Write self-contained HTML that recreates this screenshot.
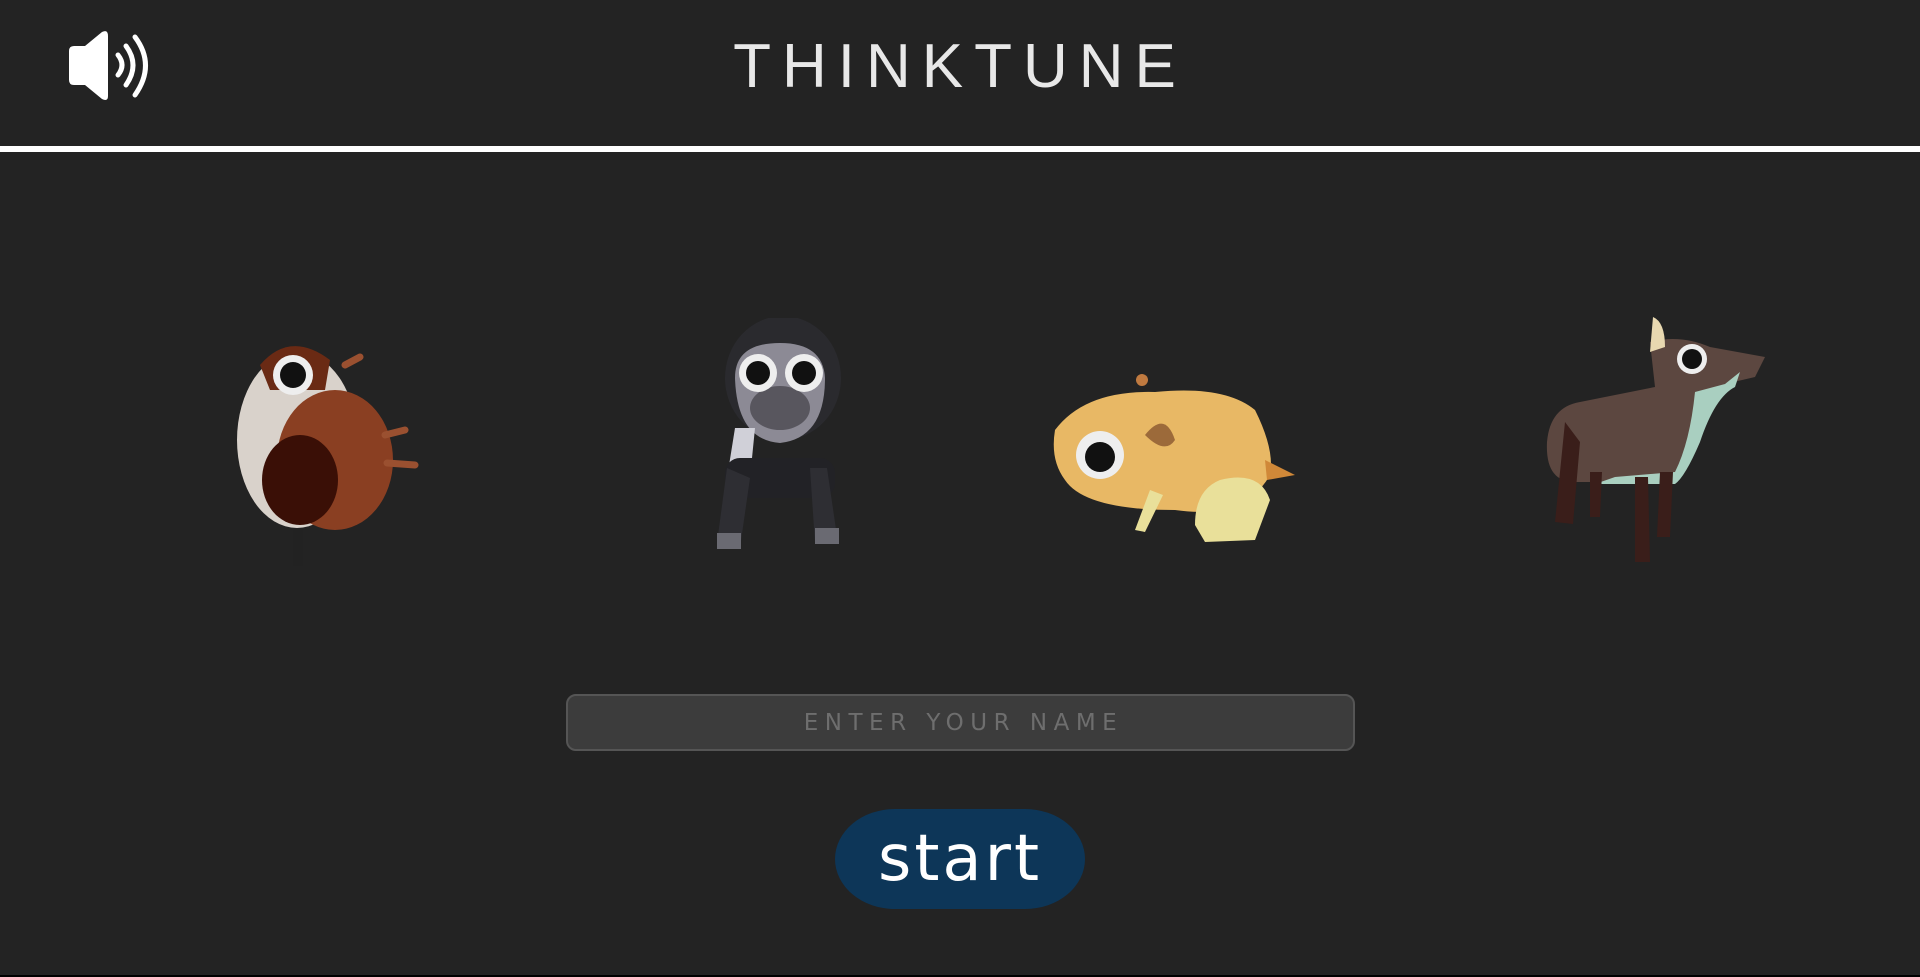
<!DOCTYPE html>
<html><head><meta charset="utf-8"><style>
html,body{margin:0;padding:0;}
body{width:1920px;height:977px;background:#232323;position:relative;overflow:hidden;font-family:"DejaVu Sans","Liberation Sans",sans-serif;}
.title{position:absolute;left:0;width:1920px;top:30px;text-align:center;color:#e8e8e8;font-size:62px;letter-spacing:11px;font-weight:300;font-family:"Liberation Sans",sans-serif;line-height:74px;padding-left:0;box-sizing:border-box}
.line{position:absolute;left:0;top:146px;width:1920px;height:6px;background:#fff}
.input{position:absolute;left:566px;top:694px;width:779px;height:53px;background:#3c3c3c;border:2px solid #555;border-radius:10px;color:#6e6e6e;font-size:23px;letter-spacing:6.5px;text-align:center;line-height:55px;padding-left:6px;box-sizing:content-box}
.btn{position:absolute;left:835px;top:809px;width:250px;height:100px;background:#0d3658;border-radius:60px/50px;color:#fff;font-size:64px;text-align:center;line-height:100px;letter-spacing:3px}
.bottom{position:absolute;left:0;top:975px;width:1920px;height:2px;background:#000}
svg{position:absolute}
</style></head><body>
<svg style="left:60px;top:30px" width="100" height="75" viewBox="0 0 100 75">
<path d="M14 16 H25 L42 2 Q48 -1 48 6 V66 Q48 72 42 69 L25 55 H14 Q9 55 9 50 V21 Q9 16 14 16Z" fill="#fff"/>
<path d="M58 25 Q66 35 58 45" stroke="#fff" stroke-width="5" fill="none" stroke-linecap="round"/>
<path d="M66 16 Q80 35 66 55" stroke="#fff" stroke-width="5" fill="none" stroke-linecap="round"/>
<path d="M75 7 Q96 35 75 65" stroke="#fff" stroke-width="5" fill="none" stroke-linecap="round"/>
</svg>
<div class="title">THINKTUNE</div>
<div class="line"></div>
<svg style="left:225px;top:335px" width="200" height="240" viewBox="0 0 200 240">
<ellipse cx="72" cy="105" rx="60" ry="88" fill="#d9d2cb"/>
<path d="M35 30 Q65 -5 105 25 L100 55 L45 55Z" fill="#6a2a14"/>
<ellipse cx="110" cy="125" rx="58" ry="70" fill="#8a3f22"/>
<ellipse cx="75" cy="145" rx="38" ry="45" fill="#3a0f06"/>
<path d="M160 100 L180 95 M162 128 L190 130 M120 30 L135 22" stroke="#9a5030" stroke-width="7" stroke-linecap="round"/>
<circle cx="68" cy="40" r="20" fill="#eee"/><circle cx="68" cy="40" r="13" fill="#111"/>
<rect x="68" y="195" width="10" height="36" fill="#222"/>
</svg>
<svg style="left:705px;top:318px" width="150" height="240" viewBox="0 0 150 240">
<ellipse cx="78" cy="60" rx="58" ry="62" fill="#2a2a2e"/>
<path d="M30 60 Q30 25 75 25 Q118 25 120 60 Q120 120 75 125 Q32 122 30 60Z" fill="#8c8a95"/>
<ellipse cx="75" cy="90" rx="30" ry="22" fill="#58565e"/>
<circle cx="53" cy="55" r="19" fill="#eee"/><circle cx="53" cy="55" r="12" fill="#111"/>
<circle cx="99" cy="55" r="19" fill="#eee"/><circle cx="99" cy="55" r="12" fill="#111"/>
<path d="M30 110 L22 160 L45 160 L50 110Z" fill="#d0d0d8"/>
<rect x="20" y="140" width="110" height="40" rx="15" fill="#222226"/>
<path d="M22 150 L12 225 L35 230 L45 160Z M105 150 L110 225 L133 225 L122 150Z" fill="#2e2e33"/>
<rect x="12" y="215" width="24" height="16" fill="#6a6a72"/><rect x="110" y="210" width="24" height="16" fill="#6a6a72"/>
</svg>
<svg style="left:1045px;top:370px" width="260" height="180" viewBox="0 0 260 180">
<path d="M10 60 Q40 20 110 22 Q180 15 210 40 Q230 80 225 105 Q200 150 130 140 Q40 140 20 110 Q5 90 10 60Z" fill="#e8b865"/>
<path d="M100 65 Q120 40 130 70 Q120 85 100 65Z" fill="#9c6a3a"/>
<path d="M175 110 Q215 100 225 130 L210 170 L160 172 L150 155 Q150 120 175 110Z" fill="#e9e09a"/>
<path d="M105 120 L90 160 L100 162 L118 125Z" fill="#e9e09a"/>
<path d="M220 90 L250 105 L222 110Z" fill="#d08838"/>
<circle cx="55" cy="85" r="24" fill="#eee"/><circle cx="55" cy="87" r="15" fill="#111"/>
<circle cx="97" cy="10" r="6" fill="#c07a40"/>
</svg>
<svg style="left:1535px;top:312px" width="235" height="260" viewBox="0 0 235 260">
<path d="M115 30 Q145 22 175 35 L230 45 L220 65 L190 72 Q175 80 160 120 Q150 160 140 170 L40 170 Q10 170 12 130 Q15 95 45 90 L120 75Z" fill="#5c4740"/>
<path d="M160 80 L190 72 L205 60 L200 75 Q180 85 165 130 Q150 165 140 172 L60 172 L80 165 L140 160 Q155 130 160 80Z" fill="#a9cfc0"/>
<path d="M118 5 Q130 10 130 35 L115 40Z" fill="#e8d8b0"/>
<path d="M30 110 L20 210 L38 212 L45 130Z M55 160 L55 205 L65 205 L67 160Z M100 165 L100 250 L115 250 L113 165Z M125 160 L122 225 L135 225 L138 160Z" fill="#3a1e1a"/>
<circle cx="157" cy="47" r="15" fill="#eee"/><circle cx="157" cy="47" r="10" fill="#111"/>
</svg>
<div class="input">ENTER YOUR NAME</div>
<div class="btn">start</div>
<div class="bottom"></div>
</body></html>
